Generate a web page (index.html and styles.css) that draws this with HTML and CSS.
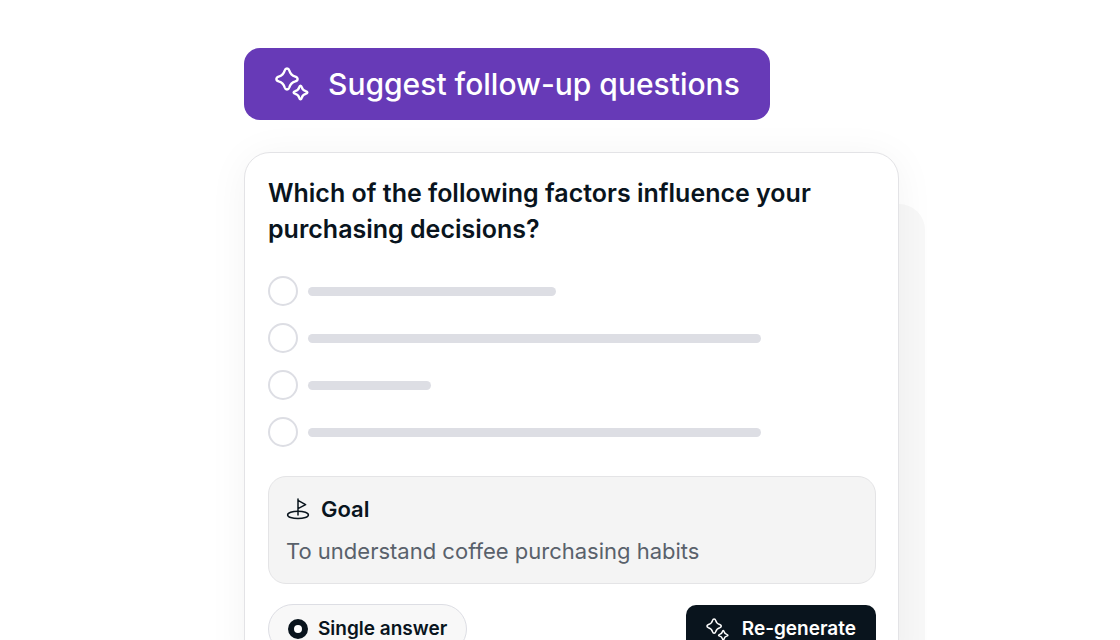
FILE: index.html
```html
<!DOCTYPE html>
<html lang="en">
  <head>
    <meta charset="utf-8">
    <meta name="viewport" content="width=device-width, initial-scale=1">
    <title>Suggest follow-up questions</title>
    <link rel="stylesheet" href="styles.css">
  </head>

  <body>

    <!-- shared icon -->
    <svg class="defs" aria-hidden="true">
      <symbol id="sparkles" viewBox="0 0 34 34">
        <path d="M12 1.5 C13.3 1.5 13.9 2.2 14.3 3.5 C15.3 7.2 16.5 8.5 20.3 9.6 C21.8 10.1 22.6 10.8 22.6 12 C22.6 13.2 21.8 13.9 20.3 14.4 C16.5 15.5 15.3 16.8 14.3 20.5 C13.9 21.8 13.3 22.5 12 22.5 C10.7 22.5 10.1 21.8 9.7 20.5 C8.7 16.8 7.5 15.5 3.7 14.4 C2.2 13.9 1.4 13.2 1.4 12 C1.4 10.8 2.2 10.1 3.7 9.6 C7.5 8.5 8.7 7.2 9.7 3.5 C10.1 2.2 10.7 1.5 12 1.5 Z"/>
        <path d="M25.5 18.6 C26.2 18.6 26.5 19.2 26.8 20.3 C27.4 22.7 28.3 23.6 30.7 24.2 C31.8 24.5 32.4 24.8 32.4 25.5 C32.4 26.2 31.8 26.5 30.7 26.8 C28.3 27.4 27.4 28.3 26.8 30.7 C26.5 31.8 26.2 32.4 25.5 32.4 C24.8 32.4 24.5 31.8 24.2 30.7 C23.6 28.3 22.7 27.4 20.3 26.8 C19.2 26.5 18.6 26.2 18.6 25.5 C18.6 24.8 19.2 24.5 20.3 24.2 C22.7 23.6 23.6 22.7 24.2 20.3 C24.5 19.2 24.8 18.6 25.5 18.6 Z"/>
      </symbol>
    </svg>

    <main class="stage">
      <button type="button" class="suggest">
        <svg class="suggest-icon" aria-hidden="true"><use href="#sparkles"/></svg>
        Suggest follow-up questions
      </button>

      <div class="stack">
        <form class="card">
          <fieldset class="question">
            <legend>Which of the following factors influence your purchasing decisions?</legend>
            <div class="options">
              <label class="option"><input type="radio" name="factor" aria-label="Answer 1"><span class="bar medium"></span></label>
              <label class="option"><input type="radio" name="factor" aria-label="Answer 2"><span class="bar long"></span></label>
              <label class="option"><input type="radio" name="factor" aria-label="Answer 3"><span class="bar short"></span></label>
              <label class="option"><input type="radio" name="factor" aria-label="Answer 4"><span class="bar long"></span></label>
            </div>
          </fieldset>

          <section class="goal">
            <h2>
              <svg class="goal-icon" viewBox="0 0 24 24" aria-hidden="true">
                <ellipse cx="12" cy="17.9" rx="10.4" ry="3.7"/>
                <path d="M12 18 V2 M12 3.4 L19.6 7.6 L12 11.6"/>
              </svg>
              Goal
            </h2>
            <p>To understand coffee purchasing habits</p>
          </section>

          <div class="actions">
            <label class="answer-type">
              <input type="radio" name="type" checked>
              Single answer
            </label>
            <button type="button" class="regenerate">
              <svg class="regenerate-icon" aria-hidden="true"><use href="#sparkles"/></svg>
              Re-generate
            </button>
          </div>
        </form>
      </div>
    </main>

  </body>
</html>
```
FILE: styles.css
```css
* {
  box-sizing: border-box;
}

body {
  margin: 0;
  padding: 48px 23px 0 72px;
  background: #ffffff;
  color: #09141d;
  font-family: Inter, "Open Sans", sans-serif;
}

button,
input {
  font-family: inherit;
  margin: 0;
}

svg {
  flex: none;
  fill: none;
  stroke: currentColor;
  stroke-linecap: round;
  stroke-linejoin: round;
}

.defs {
  position: absolute;
  width: 0;
  height: 0;
}

.stage {
  max-width: 681px;
  margin: 0 auto;
}

/* purple button */

.suggest {
  display: flex;
  align-items: center;
  gap: 19px;
  padding: 18px 30px 18px 31px;
  border: 0;
  border-radius: 16px;
  background: #673ab7;
  color: #ffffff;
  font-size: 30px;
  font-weight: 500;
  line-height: 36px;
}

.suggest-icon {
  width: 34px;
  height: 34px;
  stroke-width: 2.4;
}

/* card and the sheet behind it */

.stack {
  position: relative;
  margin-top: 32px;
  padding-right: 26px;
}

.stack::before {
  content: "";
  position: absolute;
  top: 52px;
  right: 0;
  bottom: -32px;
  left: 52px;
  border-radius: 26px;
  background: #f8f8f8;
}

.card {
  position: relative;
  padding: 22px 22px 24px 23px;
  border: 1px solid #e3e3e6;
  border-radius: 26px;
  background: #ffffff;
  box-shadow: 0 4px 40px rgba(0, 0, 0, 0.05);
}

.question {
  margin: 0;
  padding: 0;
  border: 0;
}

.question legend {
  padding: 0;
  font-size: 25px;
  font-weight: 600;
  line-height: 36px;
}

.options {
  display: flex;
  flex-direction: column;
  gap: 17px;
  padding: 29px 0;
}

.option {
  display: flex;
  align-items: center;
  gap: 10px;
}

.option input {
  appearance: none;
  flex: none;
  width: 30px;
  height: 30px;
  border: 2px solid #dddee4;
  border-radius: 50%;
}

.bar {
  height: 9px;
  border-radius: 5px;
  background: #dddee4;
}

.bar.short {
  width: 123px;
}

.bar.medium {
  width: 248px;
}

.bar.long {
  width: 453px;
}

/* goal */

.goal {
  padding: 18px 17px;
  border: 1px solid #e4e4e6;
  border-radius: 18px;
  background: #f4f4f4;
}

.goal h2 {
  display: flex;
  align-items: center;
  gap: 11px;
  margin: 0 0 14px;
  font-size: 22px;
  font-weight: 600;
  line-height: 28px;
}

.goal-icon {
  width: 24px;
  height: 24px;
  stroke-width: 1.5;
}

.goal p {
  margin: 0;
  color: #59616b;
  font-size: 22px;
  line-height: 28px;
}

/* bottom row */

.actions {
  display: flex;
  align-items: center;
  justify-content: space-between;
  margin-top: 20px;
}

.answer-type {
  display: flex;
  align-items: center;
  gap: 10px;
  padding: 12px 19px;
  border: 1px solid #dddee4;
  border-radius: 25px;
  background: #f8f8f8;
  font-size: 19px;
  font-weight: 600;
  line-height: 24px;
}

.answer-type input {
  appearance: none;
  width: 20px;
  height: 20px;
  border: 6px solid #09141d;
  border-radius: 50%;
  background: #ffffff;
}

.regenerate {
  display: flex;
  align-items: center;
  gap: 13px;
  padding: 12px 20px;
  border: 0;
  border-radius: 10px;
  background: #09141d;
  color: #ffffff;
  font-size: 19px;
  font-weight: 600;
  line-height: 24px;
}

.regenerate-icon {
  width: 23px;
  height: 23px;
  stroke-width: 2.2;
}
```
